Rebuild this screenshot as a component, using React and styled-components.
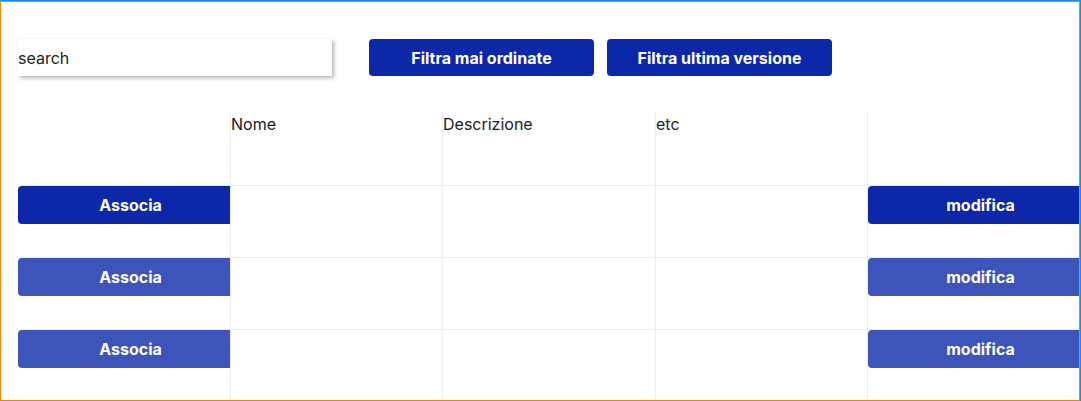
import React from "react";
import styled, { createGlobalStyle } from "styled-components";

const GlobalStyle = createGlobalStyle`
	html, body {
		margin: 0;
		padding: 0;
		background: #ffffff;
		font-family: Inter, "Noto Sans", sans-serif;
	}
	* {
		box-sizing: border-box;
	}
`;

const Frame = styled.div`
	width: 1081px;
	height: 401px;
	border-top: 1px solid #1e88e5;
	border-right: 1px solid #1e88e5;
`;

const Page = styled.div`
	height: 100%;
	border: 1px solid #f08400;
	overflow: hidden;
	padding: 37px 0 0 17px;
`;

const Toolbar = styled.div`
	display: flex;
	align-items: center;
	height: 37px;
	margin-bottom: 36px;
`;

const Search = styled.input`
	width: 314px;
	height: 37px;
	border: none;
	outline: none;
	padding: 0;
	margin-right: 37px;
	font-family: Inter, sans-serif;
	font-size: 16px;
	color: #222;
	background: #fff;
	box-shadow: 2px 2px 4px rgba(0, 0, 0, 0.3);
	&::placeholder {
		color: #222;
	}
`;

const FilterButton = styled.button`
	width: 225px;
	height: 37px;
	margin-right: 13px;
	border: none;
	border-radius: 4px;
	background: #0c28a8;
	color: #fff;
	font-family: Inter, sans-serif;
	font-weight: 700;
	font-size: 16px;
	cursor: pointer;
`;

const Table = styled.div`
	display: grid;
	grid-template-columns: 212px 212px 213px 212px 213px;
	grid-template-rows: 73px repeat(3, 72px);
	width: 1062px;
`;

// later cells are painted over earlier ones, so the wide buttons get cut at the next column
const Cell = styled.div`
	position: relative;
	background: #fff;
	border-left: ${(p) => (p.$first ? "none" : "1px solid #ebebeb")};
	border-top: ${(p) => (p.$head ? "none" : "1px solid #ebebeb")};
	font-size: 16px;
	line-height: 19px;
	color: #1a1a1a;
	padding-top: ${(p) => (p.$head ? "3px" : "0")};
`;

const RowButton = styled.button`
	display: block;
	width: 225px;
	height: 38px;
	border: none;
	border-radius: 4px;
	background: ${(p) => (p.$active ? "#0c28a8" : "#3d54bb")};
	color: #fff;
	font-family: Inter, sans-serif;
	font-weight: 700;
	font-size: 16px;
	cursor: pointer;
`;

const columns = ["Nome", "Descrizione", "etc"];
const rows = [0, 1, 2];

export default function App() {
	return (
		<>
			<GlobalStyle />
			<Frame>
				<Page>
					<Toolbar>
						<Search placeholder="search" />
						<FilterButton>Filtra mai ordinate</FilterButton>
						<FilterButton>Filtra ultima versione</FilterButton>
					</Toolbar>
					<Table>
						<Cell $head $first />
						{columns.map((c) => (
							<Cell $head key={c}>
								{c}
							</Cell>
						))}
						<Cell $head />
						{rows.map((r) => (
							<React.Fragment key={r}>
								<Cell $first>
									<RowButton $active={r === 0}>Associa</RowButton>
								</Cell>
								{columns.map((c) => (
									<Cell key={c} />
								))}
								<Cell>
									<RowButton $active={r === 0}>modifica</RowButton>
								</Cell>
							</React.Fragment>
						))}
					</Table>
				</Page>
			</Frame>
		</>
	);
}
